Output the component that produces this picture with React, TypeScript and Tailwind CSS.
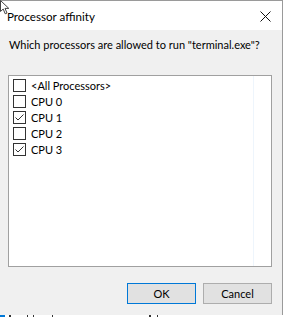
import React from "react";

const items: { label: string; checked: boolean }[] = [
  { label: "<All Processors>", checked: false },
  { label: "CPU 0", checked: false },
  { label: "CPU 1", checked: true },
  { label: "CPU 2", checked: false },
  { label: "CPU 3", checked: true },
];

function Box({ checked }: { checked: boolean }) {
  return (
    <div className="w-[13px] h-[13px] border border-[#333333] bg-white flex items-center justify-center shrink-0">
      {checked && (
        <svg width="11" height="11" viewBox="0 0 11 11">
          <path d="M1.5 5.5 L4 8 L9.5 2.5" fill="none" stroke="#333" strokeWidth="1" />
        </svg>
      )}
    </div>
  );
}

export default function App() {
  return (
    <div
      className="w-[284px] h-[317px] bg-white overflow-hidden relative text-black"
      style={{ fontFamily: 'Lato, "Noto Sans", sans-serif' }}
    >
      <div className="w-[283px] h-[315px] border-t border-r border-[#9a9a9a] flex flex-col">
        {/* title bar */}
        <div className="h-[29px] bg-white flex items-center pl-[7px] pr-[11px] justify-between">
          <span className="text-[11.6px] leading-none pt-[2px] whitespace-nowrap">Processor affinity</span>
          <svg width="11" height="11" viewBox="0 0 11 11" className="mt-[1px]">
            <path d="M0.5 0.5 L10.5 10.5 M10.5 0.5 L0.5 10.5" stroke="#111" strokeWidth="1" />
          </svg>
        </div>
        {/* body */}
        <div className="flex-1 bg-[#f0f0f0] flex flex-col pl-[8px] pr-[10px]">
          <div className="text-[11px] leading-none pt-[9px] h-[45px] whitespace-nowrap pl-[1px]">
            Which processors are allowed to run "terminal.exe"?
          </div>
          <div className="h-[192px] border border-[#a0a0a0] bg-white relative pt-[1px] pl-[4px]">
            <div className="absolute top-0 bottom-0 left-[244px] w-px bg-[#eef5fc]" />
            {items.map((it) => (
              <div key={it.label} className="h-[16px] flex items-center gap-[5px]">
                <Box checked={it.checked} />
                <span className="text-[11px] leading-none whitespace-nowrap">{it.label}</span>
              </div>
            ))}
          </div>
          <div className="flex justify-end gap-[7px] pt-[16px]">
            <button className="w-[69px] h-[21px] bg-[#e1e1e1] border border-[#0078d7] text-[11px] leading-none flex items-center justify-center">
              OK
            </button>
            <button className="w-[69px] h-[21px] bg-[#e1e1e1] border border-[#adadad] text-[11px] leading-none flex items-center justify-center">
              Cancel
            </button>
          </div>
        </div>
      </div>
      {/* underlying content strip */}
      <div className="h-[2px] flex items-start">
        <div className="w-[5px] h-[2px] bg-[#0078d7]" />
        <div className="w-[2px] h-[2px] bg-[#333] ml-[4px]" />
        <div className="w-[1px] h-[2px] bg-[#333] ml-[16px]" />
        <div className="w-[1px] h-[2px] bg-[#333] ml-[5px]" />
        <div className="w-[1px] h-[2px] bg-[#333] ml-[18px]" />
        <div className="w-[2px] h-[2px] bg-[#333] ml-[96px]" />
        <div className="w-[1px] h-[2px] bg-[#333] ml-[6px]" />
      </div>
      {/* mouse cursor overlay */}
      <svg className="absolute left-0 top-0" width="12" height="15" viewBox="0 0 12 15">
        <path d="M0.5 0.5 L0.5 11.5 L3.2 9 L5.2 13.8 L7 13 L5 8.4 L8.8 8.4 Z" fill="#fff" stroke="#444" strokeWidth="1" />
      </svg>
    </div>
  );
}
